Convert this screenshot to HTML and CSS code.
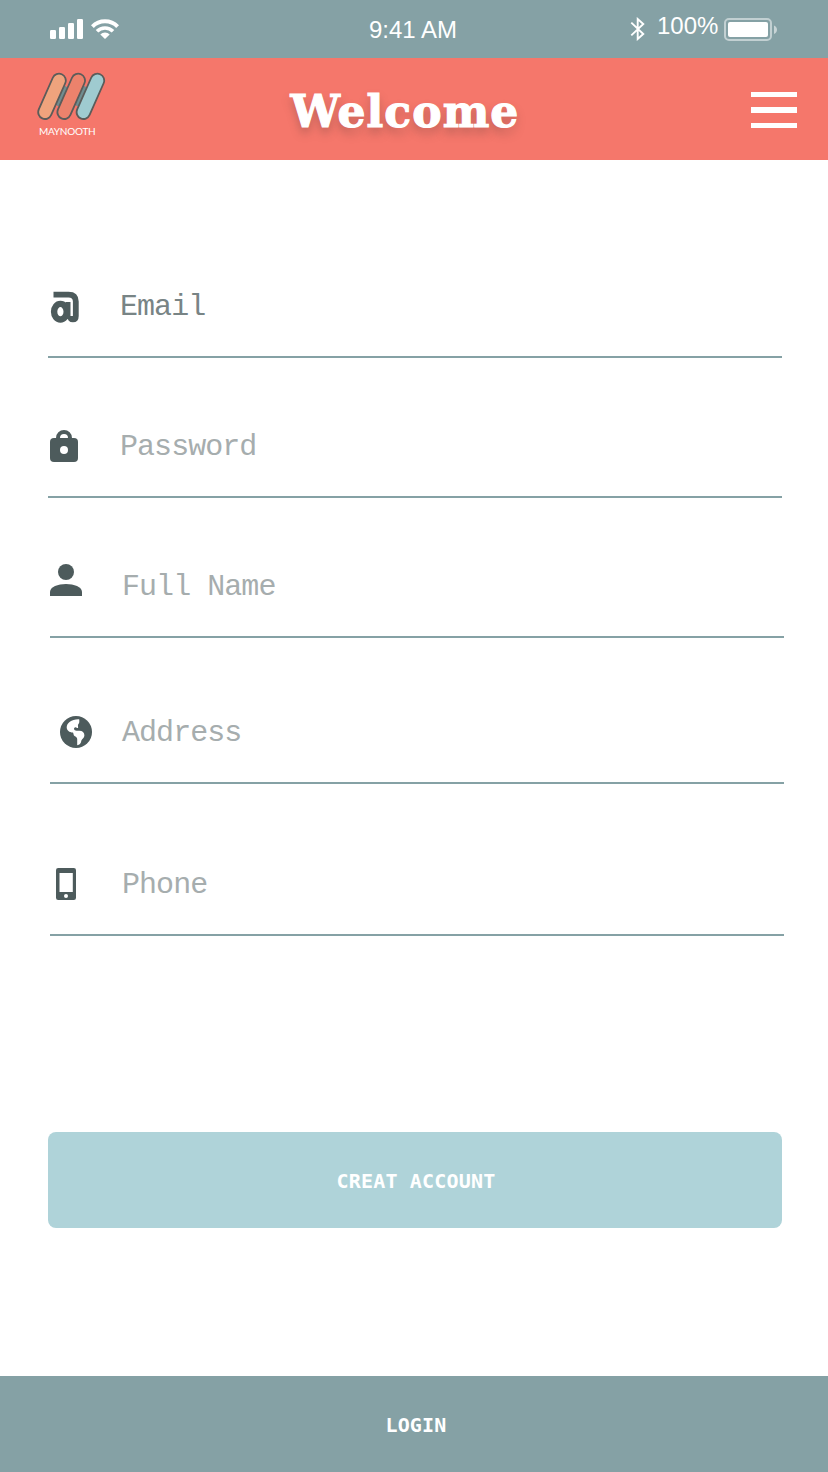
FILE: index.html
```html
<!DOCTYPE html>
<html lang="en">
<head>
<meta charset="utf-8">
<title>Welcome</title>
<link rel="stylesheet" href="styles.css">
</head>
<body>
<div class="screen">
  <div class="status">
    <div class="signal">
      <svg width="34" height="20" viewBox="0 0 34 20" fill="#fff"><rect x="0" y="11" width="6" height="9" rx="1.3"/><rect x="9" y="8" width="6" height="12" rx="1.3"/><rect x="18" y="4" width="6" height="16" rx="1.3"/><rect x="27" y="0" width="6" height="20" rx="1.3"/></svg>
      <svg width="28" height="20" viewBox="0 0 28 20"><g fill="none" stroke="#fff" stroke-width="4"><path d="M1.4 7.6a17.8 17.8 0 0 1 25.2 0"/><path d="M6 12.3a11.3 11.3 0 0 1 16 0" stroke-width="3.6"/></g><path d="M9.3 15.5a6.7 6.700 0 0 1 9.4 0L14 20z" fill="#fff"/></svg>
    </div>
    <div class="time">9:41 AM</div>
    <div class="power">
      <svg class="bluetooth" width="16" height="24" viewBox="0 0 16 24" fill="none" stroke="#fff" stroke-width="1.9"><path d="M1.3 5.600 13.300 17 7.700 22V2l5.600 5L1.300 18.400"/></svg>
      <span class="percent">100%</span>
      <svg class="battery" width="54" height="24" viewBox="0 0 54 24"><rect x="1" y="1" width="46" height="21" rx="4" fill="none" stroke="#fff" stroke-opacity=".5" stroke-width="2"/><rect x="4" y="4" width="40" height="15" rx="2" fill="#fff"/><path d="M50 7.500c4 1.500 4 7 0 8.500z" fill="#fff" fill-opacity=".55"/></svg>
    </div>
  </div>

  <header class="header">
    <div class="brand">
      <svg width="70" height="50" viewBox="36 71 70 50" stroke-linecap="round">
        <g stroke="#6f8d90" stroke-width="4"><path d="M58 104 65 88M77.200 104l7-16"/></g>
        <g stroke="#5b5c5a" stroke-width="15.400"><path d="M45 112.200 59 80.500M64.200 112.200l14-31.700M83.400 112.200l14-31.700"/></g>
        <g stroke-width="11.800"><path stroke="#efa37d" d="M45 112.200 59 80.500"/><path stroke="#ec826c" d="M64.200 112.200l14-31.700"/><path stroke="#9fcbd0" d="M83.400 112.200l14-31.700"/></g>
      </svg>
      <span class="brand-name">MAYNOOTH</span>
    </div>
    <h1 class="title">Welcome</h1>
    <div class="menu"><i></i><i></i><i></i></div>
  </header>

  <main class="form">
    <div class="field email">
      <div class="icon"><svg width="30" height="34" viewBox="0 0 30 34" fill="none" stroke="#4d5b5c"><path d="M3.500 4.600H18.500q7.300 0 7.300 7V26q0 3.400-2.900 3.400-2.600 0-2.600-3.400" stroke-width="5.800"/><ellipse cx="10.400" cy="21.700" rx="6.300" ry="7.800" stroke-width="6.400"/><path d="M18 12v17" stroke-width="5"/></svg></div>
      <span class="label">Email</span>
    </div>
    <div class="field password">
      <div class="icon"><svg width="28" height="33" viewBox="0 0 28 33"><path d="M8 11V9a6 6 0 0 1 12 0V11" fill="none" stroke="#4d5b5c" stroke-width="4"/><rect y="9" width="28" height="24" rx="4" fill="#4d5b5c"/><circle cx="14" cy="21" r="4" fill="#fff"/></svg></div>
      <span class="label">Password</span>
    </div>
    <div class="field name">
      <div class="icon"><svg width="32" height="32" viewBox="0 0 32 32" fill="#4d5b5c"><circle cx="16" cy="8" r="8"/><path d="M0 32v-4c0-5.300 8-8 16-8s16 2.700 16 8v4z"/></svg></div>
      <span class="label">Full Name</span>
    </div>
    <div class="field address">
      <div class="icon"><svg width="32" height="32" viewBox="0 0 32 32"><circle cx="16" cy="16" r="16" fill="#4d5b5c"/><path fill="#fff" d="M19.200 3.200C12 2.800 6.600 6.700 6.700 11.500c.1 3 2.500 4.900 6.300 5 .8 1.300.2 2.500 1.500 3.500 1.300.9 2.700 1.200 2.700 3v6.200c2.300-.2 3.800-1.500 4.200-4.700.8-1.700 3-2.500 3-5.200 0-2.800-2-4.600-5-4.600-2 0-4.300.3-5.200-1.200-.6-1.300.3-2.400 1.500-2.300 1 .1 1.200 1 2.300.7.500-1.200-.6-2.600.3-3.700.8-1 1.300-1.500.9-5z"/></svg></div>
      <span class="label">Address</span>
    </div>
    <div class="field phone">
      <div class="icon"><svg width="20" height="32" viewBox="0 0 20 32"><rect width="20" height="32" rx="2.200" fill="#4d5b5c"/><path d="M3.500 5h13.300v19H3.500z" fill="#fff"/><circle cx="10" cy="28" r="2" fill="#fff"/></svg></div>
      <span class="label">Phone</span>
    </div>
    <div class="button">CREAT ACCOUNT</div>
  </main>

  <footer class="login">LOGIN</footer>
</div>
</body>
</html>
```

FILE: styles.css
```css
* { box-sizing: border-box; }
body { margin: 0; background: #fff; }
svg { display: block; flex: none; }

.screen {
  width: 828px;
  height: 1472px;
  display: flex;
  flex-direction: column;
  overflow: hidden;
}

.status {
  height: 58px;
  flex: none;
  background: #85a1a5;
  color: #fff;
  display: grid;
  grid-template-columns: 319px 188px 321px;
  font: 24px/28px "Liberation Sans", Arial, sans-serif;
}
.signal { display: flex; gap: 7px; padding: 19px 0 0 50px; }
.time { padding-top: 16px; text-align: center; white-space: nowrap; }
.power { display: flex; padding-left: 123px; }
.bluetooth { margin-top: 17px; }
.percent { width: 62px; margin: 12px 5px 0 11px; }
.battery { margin-top: 18px; }

.header {
  height: 102px;
  flex: none;
  background: #f5776b;
  color: #fff;
  display: grid;
  grid-template-columns: 280px 248px 300px;
}
.brand { padding: 13px 0 0 36px; }
.brand-name {
  display: block;
  margin: 4px 0 0 3px;
  font: 10px/12px Lato, sans-serif;
  letter-spacing: -0.25px;
}
.title {
  margin: 25px 0 0;
  padding-left: 2px;
  text-align: center;
  white-space: nowrap;
  font: bold 44px/58px "DejaVu Serif", serif;
  letter-spacing: 1.1px;
  -webkit-text-stroke: 1.2px #fff;
  text-shadow: 0 6px 10px rgba(90, 60, 55, 0.35);
}
.menu {
  display: flex;
  flex-direction: column;
  gap: 10px;
  padding: 34px 0 0 223px;
}
.menu i { width: 46px; height: 5.3px; background: #fff; }

.form { flex: 1; padding-left: 48px; }
.field {
  width: 734px;
  border-bottom: 2px solid #85a1a5;
  display: flex;
  align-items: flex-end;
  font: 30px/40px "Liberation Mono", monospace;
  letter-spacing: -0.95px;
  color: #a6adae;
}
.icon { width: 72px; flex: none; }
.label { padding-bottom: 29px; }

.email { height: 198px; color: #788485; }
.email .icon { padding: 0 0 32px 2px; }
.password { height: 140px; }
.password .icon { padding: 0 0 34px 2px; }
.name, .address, .phone { margin-left: 2px; }
.name { height: 140px; }
.name .icon { padding-bottom: 40px; }
.address { height: 146px; }
.address .icon { padding: 0 0 34px 10px; }
.phone { height: 152px; }
.phone .icon { padding: 0 0 34px 6px; }

.button {
  width: 734px;
  height: 96px;
  margin-top: 196px;
  border-radius: 8px;
  background: #afd3d9;
}
.button, .login {
  color: #fff;
  display: flex;
  align-items: center;
  justify-content: center;
  padding-top: 2px;
  font: bold 20px/28px "DejaVu Sans Mono", monospace;
  letter-spacing: 0.2px;
}
.button { padding-left: 2px; }
.login { height: 96px; flex: none; background: #85a1a5; padding-left: 4px; }
```
